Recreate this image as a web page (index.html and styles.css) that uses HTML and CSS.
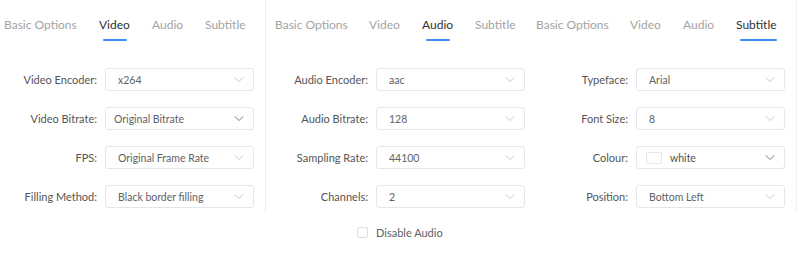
FILE: index.html
```html
<!DOCTYPE html>
<html lang="en">
<head>
  <meta charset="utf-8" />
  <title>Output Settings</title>
  <link rel="stylesheet" href="styles.css">
</head>
<body>

  <div class="panels">

    <!-- video settings -->
    <section class="panel panel-video">
      <nav class="tabs">
        <a href="#">Basic Options</a>
        <a href="#" class="active">Video</a>
        <a href="#">Audio</a>
        <a href="#">Subtitle</a>
      </nav>
      <div class="form">
        <div class="row">
          <label>Video Encoder:</label>
          <div class="select"><span>x264</span><svg class="arrow" viewBox="0 0 12 8"><path d="M1 1.5l5 5 5-5"/></svg></div>
        </div>
        <div class="row">
          <label>Video Bitrate:</label>
          <div class="select tight"><span>Original Bitrate</span><svg class="arrow dark" viewBox="0 0 12 8"><path d="M1 1.5l5 5 5-5"/></svg></div>
        </div>
        <div class="row">
          <label>FPS:</label>
          <div class="select"><span>Original Frame Rate</span><svg class="arrow" viewBox="0 0 12 8"><path d="M1 1.5l5 5 5-5"/></svg></div>
        </div>
        <div class="row">
          <label>Filling Method:</label>
          <div class="select"><span>Black border filling</span><svg class="arrow" viewBox="0 0 12 8"><path d="M1 1.5l5 5 5-5"/></svg></div>
        </div>
      </div>
    </section>

    <!-- audio settings -->
    <section class="panel panel-audio">
      <nav class="tabs">
        <a href="#">Basic Options</a>
        <a href="#">Video</a>
        <a href="#" class="active">Audio</a>
        <a href="#">Subtitle</a>
      </nav>
      <div class="form">
        <div class="row">
          <label>Audio Encoder:</label>
          <div class="select"><span>aac</span><svg class="arrow" viewBox="0 0 12 8"><path d="M1 1.5l5 5 5-5"/></svg></div>
        </div>
        <div class="row">
          <label>Audio Bitrate:</label>
          <div class="select"><span>128</span><svg class="arrow" viewBox="0 0 12 8"><path d="M1 1.5l5 5 5-5"/></svg></div>
        </div>
        <div class="row">
          <label>Sampling Rate:</label>
          <div class="select"><span>44100</span><svg class="arrow" viewBox="0 0 12 8"><path d="M1 1.5l5 5 5-5"/></svg></div>
        </div>
        <div class="row">
          <label>Channels:</label>
          <div class="select"><span>2</span><svg class="arrow" viewBox="0 0 12 8"><path d="M1 1.5l5 5 5-5"/></svg></div>
        </div>
      </div>
      <label class="checkbox"><span class="box"></span>Disable Audio</label>
    </section>

    <!-- subtitle settings -->
    <section class="panel panel-subtitle">
      <nav class="tabs">
        <a href="#">Basic Options</a>
        <a href="#">Video</a>
        <a href="#">Audio</a>
        <a href="#" class="active wide">Subtitle</a>
      </nav>
      <div class="form">
        <div class="row">
          <label>Typeface:</label>
          <div class="select"><span>Arial</span><svg class="arrow" viewBox="0 0 12 8"><path d="M1 1.5l5 5 5-5"/></svg></div>
        </div>
        <div class="row">
          <label>Font Size:</label>
          <div class="select"><span>8</span><svg class="arrow" viewBox="0 0 12 8"><path d="M1 1.5l5 5 5-5"/></svg></div>
        </div>
        <div class="row">
          <label>Colour:</label>
          <div class="select colour"><span class="swatch"></span><span>white</span><svg class="arrow dark" viewBox="0 0 12 8"><path d="M1 1.5l5 5 5-5"/></svg></div>
        </div>
        <div class="row">
          <label>Position:</label>
          <div class="select"><span>Bottom Left</span><svg class="arrow" viewBox="0 0 12 8"><path d="M1 1.5l5 5 5-5"/></svg></div>
        </div>
      </div>
    </section>

  </div>

</body>
</html>
```

FILE: styles.css
```css
body {
  margin: 0;
  font-family: Lato, "Noto Sans", sans-serif;
  background: white;
  color: #555;
}

.panels {
  display: flex;
  align-items: flex-start;
}

.panel {
  box-sizing: border-box;
  width: 266px;
  flex: none;
}

.panel-video,
.panel-subtitle {
  height: 213px;
  border-right: 1px solid #f0f0f2;
}

.panel-audio {
  width: 265px;
}

/* tabs */

.tabs {
  display: grid;
  grid-template-columns: 94px 53px 53px auto;
  justify-items: start;
  height: 40px;
  align-items: center;
  padding-top: 9px;
  box-sizing: border-box;
  white-space: nowrap;
}

.panel-video .tabs { padding-left: 4px; grid-template-columns: 95px 53px 53px auto; }
.panel-audio .tabs { padding-left: 9px; }
.panel-subtitle .tabs { padding-left: 5px; }

.tabs a {
  position: relative;
  color: #a3a3a3;
  text-decoration: none;
  font-size: 12px;
  line-height: 16px;
}

.tabs a.active {
  color: #303133;
}

.tabs a.active::after {
  content: "";
  position: absolute;
  left: 4px;
  right: 3px;
  bottom: -8px;
  height: 2px;
  background: #3a8ef6;
  border-radius: 1px;
}

.tabs a.wide::after {
  right: 0;
}

/* form rows */

.form {
  padding-top: 28px;
  display: flex;
  flex-direction: column;
  gap: 16px;
}

.row {
  display: flex;
  align-items: center;
  gap: 8px;
}

.panel-audio .row { padding-left: 5px; }

.row label {
  width: 97px;
  flex: none;
  text-align: right;
  font-size: 11px;
  color: #555;
  white-space: nowrap;
}

.select {
  box-sizing: border-box;
  width: 149px;
  height: 23px;
  border: 1px solid #e4e6eb;
  border-radius: 3px;
  display: flex;
  align-items: center;
  padding: 0 12px;
  font-size: 10.5px;
  color: #606266;
}

.select.tight {
  padding-left: 8px;
}

.select span {
  flex: 1;
}

.select .swatch {
  flex: none;
  width: 14px;
  height: 10px;
  border: 1px solid #e4e6eb;
  border-radius: 2px;
  margin: 0 8px 0 -3px;
}

.select.colour span {
  color: #505050;
}

.arrow {
  width: 10px;
  height: 7px;
  fill: none;
  stroke: #c0c4cc;
  stroke-width: 1.1;
  margin-right: -3px;
}

.arrow.dark {
  stroke: #707070;
}

/* checkbox */

.checkbox {
  display: flex;
  align-items: center;
  gap: 8px;
  margin: 18px 0 0 91px;
  font-size: 11px;
  color: #606266;
}

.checkbox .box {
  width: 9px;
  height: 9px;
  border: 1px solid #dcdfe6;
  border-radius: 2px;
}
```
